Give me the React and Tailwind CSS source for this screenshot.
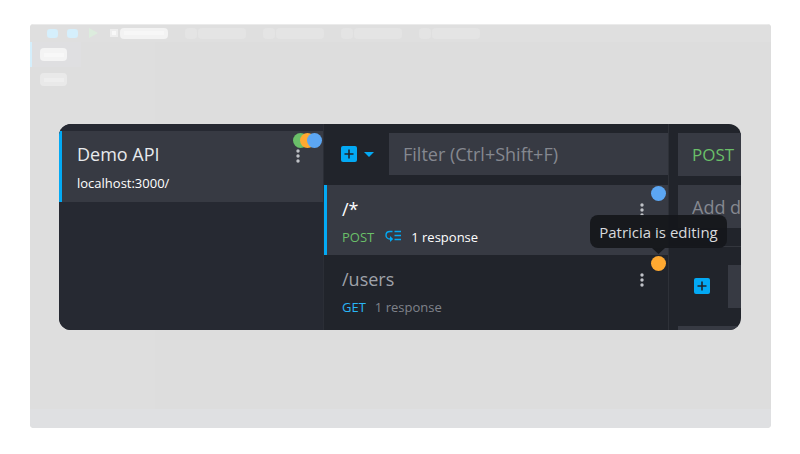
import React from "react";

function Dots() {
  return (
    <svg width="4" height="14" viewBox="0 0 4 14" fill="#bfc2c7" aria-hidden="true">
      <circle cx="2" cy="2" r="1.7" />
      <circle cx="2" cy="7" r="1.7" />
      <circle cx="2" cy="12" r="1.7" />
    </svg>
  );
}

function PlusIcon() {
  return (
    <svg width="16" height="16" viewBox="0 0 16 16" aria-hidden="true">
      <rect width="16" height="16" rx="2" fill="#03a9f4" />
      <path d="M8 3.5v9M3.5 8h9" stroke="#21242b" strokeWidth="1.6" />
    </svg>
  );
}

function RulesIcon() {
  return (
    <svg width="16" height="12" viewBox="0 0 16 12" fill="none" stroke="#03a9f4" aria-hidden="true">
      <path d="M7.5 1.5H5C2.6 1.5 1 3.2 1 5.2S2.6 9 5 9H6" strokeWidth="1.4" />
      <path d="M5 6L8.200 9L5 12Z" fill="#03a9f4" stroke="none" />
      <path d="M9.500 1.5H16M9.500 5.500H16M9.500 9.500H16" strokeWidth="1.3" />
    </svg>
  );
}

function GhostTab({ active }) {
  return (
    <div className={active ? "flex items-center gap-px pl-[3px]" : "flex items-center gap-px"}>
      <div className={active ? "grid h-2 w-2 place-items-center bg-[#eeeeee]" : "h-[11px] w-3 rounded-sm bg-[#e4e4e4]"}>
        {active && <div className="h-1 w-1 bg-[#f8f8f8]" />}
      </div>
      <div className={active ? "ml-px grid h-[11px] w-12 place-items-center rounded-sm bg-[#f3f3f3]" : "h-[11px] w-12 rounded-sm bg-[#e4e4e4]"}>
        {active && <div className="h-1 w-10 bg-[#f7f7f7]" />}
      </div>
    </div>
  );
}

function Backdrop() {
  return (
    <div className="col-start-1 row-start-1 flex flex-col overflow-hidden rounded bg-[#dddddd]" aria-hidden="true">
      <div className="flex h-[18px] items-center gap-[17px] border-t border-[#ebebeb] bg-[#dfdfdf] pb-px pl-[17px]">
        <div className="flex items-center gap-[9px]">
          <div className="h-[9px] w-[11px] rounded-[3px] bg-[#d5effc]" />
          <div className="h-[9px] w-[11px] rounded-[3px] bg-[#d5effc]" />
          <svg className="ml-0.5" width="9" height="10" viewBox="0 0 9 10"><path d="M0 0L9 5L0 10Z" fill="#dcecdd" /></svg>
          <GhostTab active />
        </div>
        <GhostTab />
        <GhostTab />
        <GhostTab />
        <GhostTab />
      </div>
      <div className="flex grow">
        <div className="w-[125px] bg-[#dedede]">
          <div className="flex h-[25px] w-[51px] items-center border-l-2 border-[#d5effc] bg-[#dfdfe1] pl-2">
            <div className="grid h-[13px] w-[27px] place-items-center rounded-sm bg-[#f4f4f4]"><div className="h-1 w-5 bg-[#f8f8f8]" /></div>
          </div>
          <div className="flex h-[25px] items-center pl-2.5">
            <div className="grid h-[13px] w-[27px] place-items-center rounded-sm bg-[#e9e9e9]"><div className="h-1 w-5 bg-[#eeeeee]" /></div>
          </div>
        </div>
      </div>
      <div className="h-[19px] bg-[#dfe0e2]" />
    </div>
  );
}

function Environments() {
  return (
    <aside className="w-[265px] shrink-0 border-r border-[#2b2e36] bg-[#262932] pt-[7px]">
      <div className="relative flex h-[71px] justify-between border-l-[3px] border-[#03a9f4] bg-[#373a43] pl-[15px] pr-[23px]">
        <div>
          <h2 className="pt-[11px] text-[18px] leading-6 text-[#e8eaed]">Demo API</h2>
          <p className="pt-[7px] text-[13px] leading-5 text-white">localhost:3000/</p>
        </div>
        <button aria-label="Environment menu" className="mt-[18px] h-[14px]"><Dots /></button>
        <div className="absolute right-px top-0.5 flex">
          <span className="h-[15px] w-[15px] rounded-full bg-[#6abf69]" />
          <span className="-ml-2 h-[15px] w-[15px] rounded-full bg-[#ffa931]" />
          <span className="-ml-2 h-[15px] w-[15px] rounded-full bg-[#5ca6f2]" />
        </div>
      </div>
    </aside>
  );
}

function Route({ path, method, active, rules }) {
  return (
    <li className={active ? "relative h-[70px] border-l-[3px] border-[#03a9f4] bg-[#373a43] pl-[15px] pt-3" : "relative h-[70px] pl-[18px] pt-3"}>
      <div className="flex justify-between pr-6">
        <span className={active ? "text-[18px] leading-6 text-white" : "text-[18px] leading-6 text-[#9fa2a9]"}>{path}</span>
        <button aria-label="Route menu" className="mt-1.5 h-[14px]"><Dots /></button>
      </div>
      <div className="flex items-center pt-1.5 text-[13px] leading-5">
        <span className={active ? "text-[#6abf69]" : "text-[#29b6f6]"}>{method}</span>
        {rules && <span className="ml-[11px] pb-0.5"><RulesIcon /></span>}
        <span className={active ? "ml-2.5 text-white" : "ml-[9px] text-[#7f828a]"}>1 response</span>
      </div>
      <span className={active ? "absolute right-0.5 top-px h-[15px] w-[15px] rounded-full bg-[#5ca6f2]" : "absolute right-0.5 top-px h-[15px] w-[15px] rounded-full bg-[#ffa931]"} />
      {!active && (
        <div role="tooltip" className="absolute -top-10 right-[-59px] z-10 h-[33px] w-[137px] whitespace-nowrap rounded-lg bg-[#15171b]/95 text-center text-[15px] leading-[34px] text-[#d8dadd]">
          Patricia is editing
          <svg className="absolute left-[62px] top-full" width="13" height="6" viewBox="0 0 13 6" fill="#16181c" aria-hidden="true"><path d="M0 0H13L6.500 6Z" /></svg>
        </div>
      )}
    </li>
  );
}

function Routes() {
  return (
    <section className="min-w-0 grow border-r border-[#2e3138]">
      <div className="flex h-[61px] items-start pt-[9px]">
        <button aria-label="Add route" className="flex h-[42px] w-[65px] shrink-0 items-center gap-[7px] pl-[17px]">
          <PlusIcon />
          <svg width="10" height="5" viewBox="0 0 10 5" fill="#03a9f4" aria-hidden="true"><path d="M0 0H10L5 5Z" /></svg>
        </button>
        <input aria-label="Filter routes" placeholder="Filter (Ctrl+Shift+F)" className="h-[42px] w-full min-w-0 bg-[#373a43] px-3.5 text-[18px] text-white outline-none placeholder:text-[#858890]" />
      </div>
      <ul>
        <Route path="/*" method="POST" active rules />
        <Route path="/users" method="GET" />
      </ul>
    </section>
  );
}

function Editor() {
  return (
    <section className="w-[72px] shrink-0 overflow-hidden pt-[9px]">
      <div className="pl-[9px]">
        <button className="block h-[43px] w-full bg-[#373a43] pl-3.5 text-left text-[17px] leading-6 text-[#6abf69]">POST</button>
        <input aria-label="Documentation" placeholder="Add documentation" className="mt-[9px] block h-[43px] w-full bg-[#373a43] pl-3.5 text-[18px] text-white outline-none placeholder:text-[#858890]" />
      </div>
      <div className="mt-[18px] h-px bg-[#33363d]" />
      <div className="mt-[18px] flex items-center pl-[25px]">
        <button aria-label="Add response" className="pb-0.5"><PlusIcon /></button>
        <div className="ml-[18px] h-[43px] grow bg-[#373a43]" />
      </div>
      <div className="ml-[9px] mt-[18px] h-1 bg-[#373a43]" />
    </section>
  );
}

export default function App() {
  return (
    <main className="grid min-h-screen bg-white pb-[26px] pl-[30px] pr-[29px] pt-6 font-['Open_Sans','Noto_Sans',sans-serif]">
      <Backdrop />
      <div className="z-10 col-start-1 row-start-1 ml-[29px] mr-[30px] mt-[100px] flex h-[206px] self-start overflow-hidden rounded-xl bg-[#21242b]">
        <Environments />
        <Routes />
        <Editor />
      </div>
    </main>
  );
}
